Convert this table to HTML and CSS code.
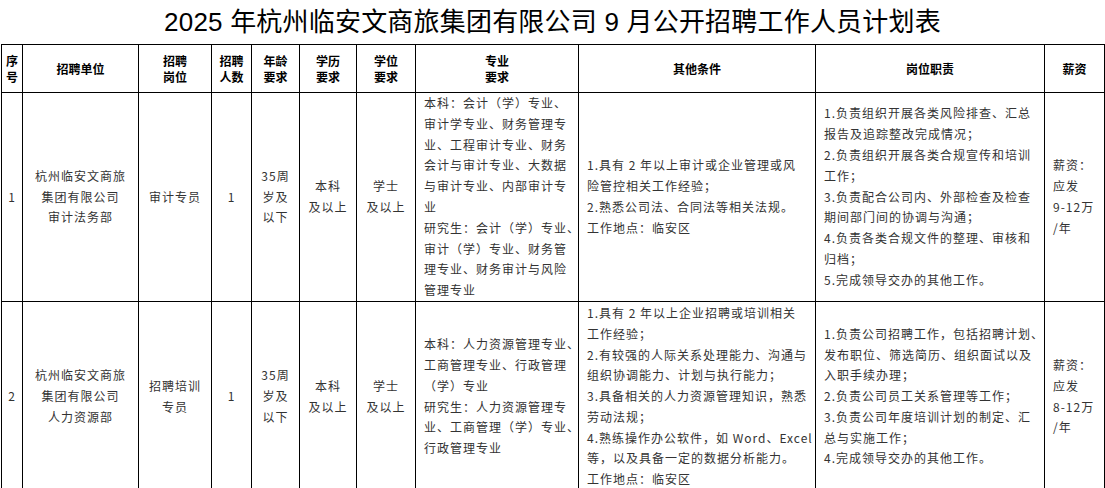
FILE: index.html
```html
<!DOCTYPE html>
<html lang="zh-CN">
<head>
<meta charset="utf-8">
<title>2025 年杭州临安文商旅集团有限公司 9 月公开招聘工作人员计划表</title>
<link rel="stylesheet" href="styles.css">
</head>
<body>
<h1 class="title">2025 年杭州临安文商旅集团有限公司 9 月公开招聘工作人员计划表</h1>
<table class="plan">
  <colgroup>
    <col class="w-no">
    <col class="w-unit">
    <col class="w-post">
    <col class="w-num">
    <col class="w-age">
    <col class="w-edu">
    <col class="w-deg">
    <col class="w-major">
    <col class="w-other">
    <col class="w-duty">
    <col class="w-pay">
  </colgroup>
  <thead>
    <tr class="head">
      <th>序<br>号</th>
      <th>招聘单位</th>
      <th>招聘<br>岗位</th>
      <th>招聘<br>人数</th>
      <th>年龄<br>要求</th>
      <th>学历<br>要求</th>
      <th>学位<br>要求</th>
      <th>专业<br>要求</th>
      <th>其他条件</th>
      <th>岗位职责</th>
      <th>薪资</th>
    </tr>
  </thead>
  <tbody>
    <tr class="row1">
      <td>1</td>
      <td>杭州临安文商旅<br>集团有限公司<br>审计法务部</td>
      <td>审计专员</td>
      <td>1</td>
      <td>35周<br>岁及<br>以下</td>
      <td>本科<br>及以上</td>
      <td>学士<br>及以上</td>
      <td class="txt">本科：会计（学）专业、<br>审计学专业、财务管理专<br>业、工程审计专业、财务<br>会计与审计专业、大数据<br>与审计专业、内部审计专<br>业<br>研究生：会计（学）专业、<br>审计（学）专业、财务管<br>理专业、财务审计与风险<br>管理专业</td>
      <td class="txt">1.具有 2 年以上审计或企业管理或风<br>险管控相关工作经验；<br>2.熟悉公司法、合同法等相关法规。<br>工作地点：临安区</td>
      <td class="txt">1.负责组织开展各类风险排查、汇总<br>报告及追踪整改完成情况；<br>2.负责组织开展各类合规宣传和培训<br>工作；<br>3.负责配合公司内、外部检查及检查<br>期间部门间的协调与沟通；<br>4.负责各类合规文件的整理、审核和<br>归档；<br>5.完成领导交办的其他工作。</td>
      <td class="txt">薪资：<br>应发<br>9-12万<br>/年</td>
    </tr>
    <tr class="row2">
      <td>2</td>
      <td>杭州临安文商旅<br>集团有限公司<br>人力资源部</td>
      <td>招聘培训<br>专员</td>
      <td>1</td>
      <td>35周<br>岁及<br>以下</td>
      <td>本科<br>及以上</td>
      <td>学士<br>及以上</td>
      <td class="txt">本科：人力资源管理专业、<br>工商管理专业、行政管理<br>（学）专业<br>研究生：人力资源管理专<br>业、工商管理（学）专业、<br>行政管理专业</td>
      <td class="txt">1.具有 2 年以上企业招聘或培训相关<br>工作经验；<br>2.有较强的人际关系处理能力、沟通与<br>组织协调能力、计划与执行能力；<br>3.具备相关的人力资源管理知识，熟悉<br>劳动法规；<br>4.熟练操作办公软件，如 Word、Excel<br>等，以及具备一定的数据分析能力。<br>工作地点：临安区</td>
      <td class="txt">1.负责公司招聘工作，包括招聘计划、<br>发布职位、筛选简历、组织面试以及<br>入职手续办理；<br>2.负责公司员工关系管理等工作；<br>3.负责公司年度培训计划的制定、汇<br>总与实施工作；<br>4.完成领导交办的其他工作。</td>
      <td class="txt">薪资：<br>应发<br>8-12万<br>/年</td>
    </tr>
  </tbody>
</table>
</body>
</html>
```
FILE: styles.css
```css
html, body {
  margin: 0;
  padding: 0;
  background: #fff;
}

body {
  font-family: "Noto Sans CJK SC", "Liberation Sans", sans-serif;
  color: #000;
}

.title {
  margin: 0;
  height: 44px;
  line-height: 44px;
  text-align: center;
  font-family: "Liberation Sans", "Noto Sans CJK SC", sans-serif;
  font-size: 26px;
  font-weight: 400;
  letter-spacing: 0.2px;
  color: #000;
}

.plan {
  border-collapse: collapse;
  table-layout: fixed;
  width: 1103px;
  margin-left: 1px;
}

.w-no { width: 21px; }
.w-unit { width: 116px; }
.w-post { width: 73px; }
.w-num { width: 40px; }
.w-age { width: 48px; }
.w-edu { width: 57px; }
.w-deg { width: 59px; }
.w-major { width: 163px; }
.w-other { width: 237px; }
.w-duty { width: 229px; }
.w-pay { width: 60px; }

.plan th,
.plan td {
  border: 1px solid #000;
  padding: 0;
  vertical-align: middle;
}

.plan th {
  font-size: 12px;
  font-weight: 700;
  line-height: 16px;
  text-align: center;
  color: #000;
}

.plan td {
  font-size: 12px;
  line-height: 20.8px;
  letter-spacing: 1px;
  color: #333;
  text-align: center;
  white-space: nowrap;
  overflow: visible;
}

.plan td.txt {
  text-align: left;
  padding-left: 8px;
}

.head { height: 48px; }
.row1 { height: 209px; }
.row2 { height: 190px; }
```
